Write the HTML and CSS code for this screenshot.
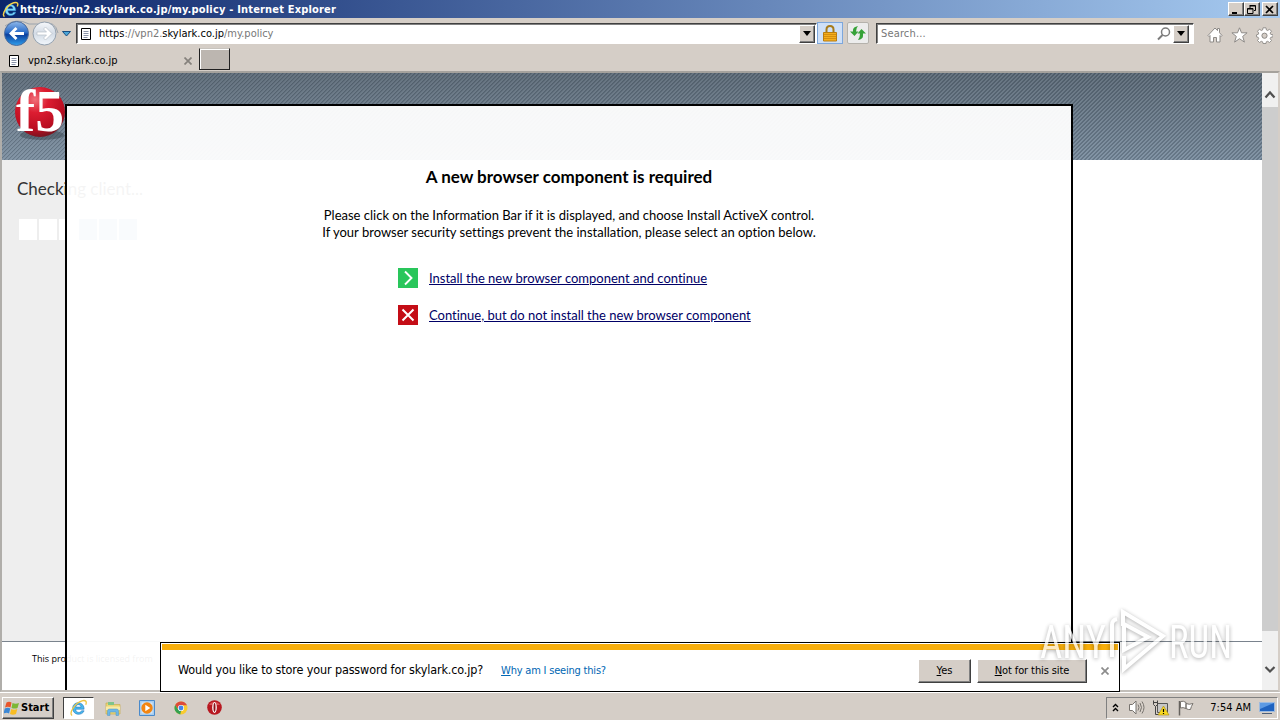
FILE: index.html
```html
<!DOCTYPE html>
<html lang="en">
<head>
    <meta charset="UTF-8">
    <title>https://vpn2.skylark.co.jp/my.policy</title>
    <link rel="stylesheet" href="styles.css">
</head>
<body>
    <div class="titlebar">
        <svg class="ie" width="17" height="17" viewBox="0 0 18 18"><path d="M14.6 10.2H6.2c.2 4 5 4 5.800 1.600h2.600C12.800 17 3.200 16.600 3.200 9.200 3.200 2 14.600 1.600 14.600 10.200zM6.200 8.100h5.400c-.3-3.300-5-3.300-5.400 0z" fill="#7fd8fb" stroke="#2688cc" stroke-width=".5"/><path d="M2.600 16.500C-1 14 6 3.500 12.500 1.800c4-1 5 .8 3.700 4" fill="none" stroke="#f7d34a" stroke-width="1.500"/></svg>
        <span class="title-text">https://vpn2.skylark.co.jp/my.policy - Internet Explorer</span>
        <div class="win-buttons">
            <div class="btn win"><svg width="14" height="11"><path d="M3 8h5v2H3z"/></svg></div>
            <div class="btn win"><svg width="14" height="11"><path d="M5 1.500h5.500v5H9M5 1v3M5 2h5.500M2.500 4.500h5.500v5H2.500zM2.500 5h5.500" fill="none" stroke="#000"/></svg></div>
            <div class="btn win last"><svg width="14" height="11"><path d="M3 2l7 7M10 2l-7 7" stroke="#000" stroke-width="1.700"/></svg></div>
        </div>
    </div>

    <div class="navbar">
        <svg class="arrows" width="74" height="30" viewBox="0 0 74 30">
            <defs>
                <linearGradient id="blue" x1="0" y1="0" x2="0" y2="1"><stop offset="0" stop-color="#8fb8ea"/><stop offset=".45" stop-color="#2b6cc8"/><stop offset=".55" stop-color="#0b3f9d"/><stop offset="1" stop-color="#2fa0ee"/></linearGradient>
                <linearGradient id="pale" x1="0" y1="0" x2="0" y2="1"><stop offset="0" stop-color="#f6f8fb"/><stop offset=".5" stop-color="#d3dbe5"/><stop offset="1" stop-color="#f2f7fc"/></linearGradient>
            </defs>
            <path d="M4 8Q15-1 28 6h14q12-4 15 9" fill="none" stroke="#9aa3ad"/>
            <circle cx="15.500" cy="15.500" r="12" fill="url(#blue)" stroke="#4d6c9c"/>
            <path d="M8 15.500l6.500-6.500 2 2-3 3H23v3h-9.500l3 3-2 2z" fill="#fff"/>
            <circle cx="43.500" cy="15.500" r="11.500" fill="url(#pale)" stroke="#93a0ae"/>
            <path d="M51 15.500l-6.500-6.500-2 2 3 3H36v3h9.500l-3 3 2 2z" fill="#fff" stroke="#b7bec7" stroke-width=".7"/>
            <path d="M61.500 13.500h8L65.500 18z" fill="#4ba6d8" stroke="#174f83"/>
        </svg>
        <div class="field address">
            <svg class="page-icon" width="10" height="12"><path d="M.5.5h9v11h-9z" fill="#fff" stroke="#000"/><path d="M2.500 3.500h5M2.500 5.500h5M2.500 7.500h5M2.500 9.500h4" stroke="#8a93a8"/></svg>
            <span class="url"><b>https</b>://vpn2.<b>skylark.co.jp</b>/my.policy</span>
            <div class="btn drop"><svg width="8" height="5"><path d="M0 0h8L4 5z"/></svg></div>
        </div>
        <div class="lock"><svg width="14" height="17"><path d="M3.500 8V4.500q0-3.500 3.500-3.500t3.500 3.500V8" fill="none" stroke="#a77b1a" stroke-width="2"/><path d="M.5 7.500h13v8.500H.5z" fill="#f5ae1c" stroke="#b97d10"/><path d="M1 9.500h12M1 11.500h12M1 13.500h12" stroke="#d48e10"/></svg></div>
        <div class="refresh"><svg width="16" height="14"><path d="M0 5.500h3V4q0-3 5-4-2 2-2 5.500h2.500L4.500 10zM16 7.500h-3V10q0 3-5 4 2-2 2-6.500H7.500L11.500 3z" fill="#36a238"/></svg></div>
        <div class="field search">
            <span class="search-text">Search...</span>
            <svg width="14" height="14"><circle cx="8.500" cy="5" r="4" fill="none" stroke="#7b7b7b" stroke-width="1.500"/><path d="M5.500 8L1 12.500" stroke="#7b7b7b" stroke-width="2"/></svg>
            <div class="btn drop"><svg width="8" height="5"><path d="M0 0h8L4 5z"/></svg></div>
        </div>
        <div class="tools">
            <svg width="16" height="16" viewBox="0 0 16 16"><path d="M1 8.500L8 1l2.500 2.600V1.500h2v4.200L15 8.500 14 9.500l-1-1V15H9.500v-4.500h-3V15H3V8.500l-1 1z" fill="#fff" stroke="#8d8a87"/></svg>
            <svg width="17" height="16" viewBox="0 0 17 16"><path d="M8.500.8l2 5h5.600l-4.400 3.600 1.700 5.700-4.900-3.400-4.900 3.400 1.700-5.700L.9 5.800h5.600z" fill="#fff" stroke="#8d8a87"/></svg>
            <svg width="17" height="17" viewBox="0 0 17 17"><path d="M7 .8h3l.4 2.200 1.300.5 1.800-1.300 2 2-1.300 1.900.6 1.300 2.200.4v2l-2.200.5-.6 1.400 1.300 1.800-2 2-1.800-1.200-1.400.5L10 16.500H7l-.4-1.700-1.300-.5-1.800 1.200-2-2 1.200-1.800-.5-1.400L.5 9.800v-2l1.700-.4.5-1.300-1.200-1.900 2-2 1.800 1.300L6.600 3z" fill="#fff" stroke="#8d8a87" stroke-width=".9"/><circle cx="8.500" cy="8.700" r="2.600" fill="#d5cec7" stroke="#8d8a87"/></svg>
        </div>
    </div>

    <div class="tabs">
        <div class="tab">
            <svg class="page-icon" width="10" height="12"><path d="M.5.5h9v11h-9z" fill="#fff" stroke="#000"/><path d="M2.500 3.500h5M2.500 5.500h5M2.500 7.500h5M2.500 9.500h4" stroke="#8a93a8"/></svg>
            <span class="tab-text">vpn2.skylark.co.jp</span>
            <svg class="x" width="8" height="8"><path d="M.5.5l7 7M7.500.5l-7 7" stroke="#85817c" stroke-width="1.700"/></svg>
        </div>
        <div class="new-tab"></div>
    </div>

    <div class="view">
        <div class="page">
            <div class="header">
                <svg width="54" height="56" viewBox="0 0 54 56">
                    <defs><radialGradient id="ball" cx=".4" cy=".25" r=".75"><stop offset="0" stop-color="#f0707a"/><stop offset=".35" stop-color="#dc1d31"/><stop offset=".8" stop-color="#b90d20"/><stop offset="1" stop-color="#7c1420"/></radialGradient></defs>
                    <ellipse cx="28" cy="48" rx="22" ry="5" fill="#3a4650" opacity=".5"/>
                    <circle cx="26" cy="25" r="25" fill="url(#ball)"/>
                    <text x="2" y="44" class="f5" textLength="48" lengthAdjust="spacingAndGlyphs">f5</text>
                </svg>
            </div>
            <div class="main">
                <div class="side">
                    <div class="checking">Checking client...</div>
                    <div class="boxes"><i></i><i></i><i></i><i class="on"></i><i class="on"></i><i class="on"></i></div>
                </div>
            </div>
            <div class="footer"><span class="product">This product is licensed from</span></div>

            <div class="modal">
                <h1>A new browser component is required</h1>
                <p>Please click on the Information Bar if it is displayed, and choose Install ActiveX control.<br>If your browser security settings prevent the installation, please select an option below.</p>
                <div class="option">
                    <svg width="20" height="20"><path d="M0 0h20v20H0z" fill="#29c65b"/><path d="M7 3.500L13.500 10 7 16.500" fill="none" stroke="#fff" stroke-width="1.900"/></svg>
                    <a>Install the new browser component and continue</a>
                </div>
                <div class="option">
                    <svg width="20" height="20"><path d="M0 0h20v20H0z" fill="#c40d16"/><path d="M4.500 4.500l11 11M15.500 4.500l-11 11" stroke="#fff" stroke-width="2"/></svg>
                    <a>Continue, but do not install the new browser component</a>
                </div>
            </div>
        </div>
        <div class="scrollbar">
            <svg width="16" height="34"><path d="M3.500 24.500L8 19.500l4.500 5" fill="none" stroke="#505050" stroke-width="2.200"/></svg>
            <div class="thumb"></div>
            <svg width="16" height="59"><path d="M3.500 36L8 40.500l4.500-4.500" fill="none" stroke="#505050" stroke-width="2.200"/></svg>
        </div>

        <div class="notice">
            <div class="stripe"></div>
            <div class="notice-row">
                <span class="question">Would you like to store your password for skylark.co.jp?</span>
                <a class="why"><u>W</u>hy am I seeing this?</a>
                <div class="btn yes"><span><u>Y</u>es</span></div>
                <div class="btn not"><span><u>N</u>ot for this site</span></div>
                <svg width="8" height="8"><path d="M.5.5l7 7M7.500.5l-7 7" stroke="#8c8c8c" stroke-width="1.700"/></svg>
            </div>
        </div>

        <svg class="watermark" width="200" height="70" viewBox="0 0 200 70">
            <text x="4" y="51" textLength="66" lengthAdjust="spacingAndGlyphs">ANY</text>
            <path d="M81 12q-5 1-5 6v32M87 19V5l40 24-39 33V49M88 17v26l24-13z"/>
            <text x="133" y="51" textLength="63" lengthAdjust="spacingAndGlyphs">RUN</text>
        </svg>
    </div>

    <div class="taskbar">
        <div class="btn start">
            <svg width="16" height="16" viewBox="0 0 16 16"><path d="M2.500 2.500Q5 1 7.500 2.500L6.500 7.500Q4 6 1 7.500z" fill="#e9552b"/><path d="M8.500 3Q11.500 4.500 15 3l-1.500 5Q11 9 7.500 8z" fill="#7cb735"/><path d="M.8 8.500Q4 7 6.300 8.500L5 13.500Q3 12-.5 13.500z" fill="#3b87d5"/><path d="M7.300 9Q10 10.500 13.300 9L12 14q-3 1.500-6 0z" fill="#f9bd22"/></svg>
            <span class="start-text">Start</span>
        </div>
        <div class="task active"><svg width="19" height="18" viewBox="0 0 18 18"><path d="M14.600 10.200H6.200c.2 4 5 4 5.800 1.600h2.600C12.800 17 3.200 16.600 3.200 9.200 3.200 2 14.600 1.600 14.600 10.200zM6.200 8.100h5.400c-.3-3.300-5-3.300-5.400 0z" fill="#48b9ee" stroke="#2276bd" stroke-width=".6"/><path d="M2.600 16.500C-1 14 6 3.500 12.500 1.800c4-1 5 .8 3.700 4" fill="none" stroke="#eec443" stroke-width="1.300"/></svg></div>
        <div class="task"><svg width="16" height="16"><path d="M1 3h5l1 1.500h8V14H1z" fill="#ecd675" stroke="#c9ae52" stroke-width=".7"/><path d="M3 2h6v3H3z" fill="#7fc48a"/><path d="M1 6.500h14V10H1z" fill="#f8eba6"/><path d="M2.500 15.500V11q0-2 2-2h7q2 0 2 2v4.500h-2.500v-3.500H5v3.500z" fill="#6db7e6" stroke="#4d94c7" stroke-width=".5"/></svg></div>
        <div class="task"><svg width="16" height="16"><path d="M.5.5h15v15H.5z" fill="#a7cdf0" stroke="#4a8acb"/><path d="M2.500 2.500h11v11h-11z" fill="#d3e6f8"/><circle cx="8" cy="8" r="5.700" fill="#f28512"/><path d="M6.300 4.700L11.300 8l-5 3.300z" fill="#fff"/></svg></div>
        <div class="task"><svg width="14" height="14" viewBox="0 0 14 14"><circle cx="7" cy="7" r="6.500" fill="#f8cb30"/><path d="M1.200 4A6.600 6.600 0 0 1 13 4.200H7L4.300 8.500z" fill="#dd4a3a"/><path d="M1.200 4L4.300 8.700 7 10l-.8 3.500A6.600 6.600 0 0 1 1.200 4z" fill="#35a152"/><circle cx="7" cy="7" r="3.100" fill="#fff"/><circle cx="7" cy="7" r="2.400" fill="#4484e8"/></svg></div>
        <div class="task"><svg width="15" height="15" viewBox="0 0 15 15"><circle cx="7.500" cy="7.500" r="7.300" fill="#b81820"/><path d="M2 5a6 5 0 0 1 11 0z" fill="#da5154"/><ellipse cx="7.500" cy="7.500" rx="2.300" ry="5.400" fill="#fff"/><ellipse cx="7.500" cy="7.500" rx="1" ry="4.400" fill="#8c1017"/></svg></div>
        <div class="tray">
            <svg width="8" height="9"><path d="M1 4l2.500-2.500L6 4M1 8l2.500-2.500L6 8" fill="none" stroke="#000" stroke-width="1.400"/></svg>
            <svg width="17" height="15"><path d="M1.500 4.500h3l3.500-3.500v13L4.500 10.500h-3z" fill="#fff" stroke="#77736e"/><path d="M10 4.500q2 3 0 6M12 3q3 4.500 0 9M14 1.500q4 6 0 12" fill="none" stroke="#77736e"/></svg>
            <svg width="17" height="16"><path d="M4.500 3.500h10v9h-10z" fill="#c7c7c7" stroke="#555"/><path d="M.5.500v4l2 2v8H8M4.500.5v4l-2 2M.5 2.500h4" fill="none" stroke="#444"/><path d="M10.500 6L16 15H5z" fill="#f8d821" stroke="#a88a10" stroke-width=".6"/><path d="M10.500 9v3M10.500 13v1" stroke="#000" stroke-width="1.200"/></svg>
            <svg width="17" height="16"><path d="M1.500 1v14.500" stroke="#66625d" stroke-width="1.500"/><path d="M2.500 1.500q3-1 5.500 1v6q-3-1.500-5.500-.5zM8 3.500q3 1.500 7 0-2 3-2.500 6-2 .5-4.500-1z" fill="#fff" stroke="#77736e"/></svg>
            <span class="clock">7:54 AM</span>
            <svg width="16" height="14"><path d="M.5 1.500h15v9H.5z" fill="#1f63c0" stroke="#9dbbe0"/><path d="M1 2h14L1 8z" fill="#5c9ae4"/><path d="M3 12.500h10" stroke="#4d5f77"/></svg>
        </div>
    </div>
</body>
</html>
```
FILE: styles.css
```css
* {
    box-sizing: border-box;
}
body {
    margin: 0;
    width: 1280px;
    height: 720px;
    overflow: hidden;
    display: flex;
    flex-direction: column;
    background: #d5cec7;
    font-family: "DejaVu Sans Condensed", "DejaVu Sans", sans-serif;
    font-stretch: condensed;
    font-size: 11px;
    color: #000;
    white-space: nowrap;
}
svg {
    display: block;
    flex: none;
}
.btn {
    display: flex;
    align-items: center;
    justify-content: center;
    background: #d5cec7;
    border: 1px solid;
    border-color: #fff #404040 #404040 #fff;
    box-shadow: inset -1px -1px #808080;
}

/* window chrome */
.titlebar {
    flex: none;
    height: 18px;
    padding: 0 2px;
    display: flex;
    align-items: center;
    background: linear-gradient(90deg, #0a246a, #a6caf0);
}
.title-text {
    margin-left: 1px;
    color: #fff;
    font-weight: bold;
    letter-spacing: .18px;
}
.win-buttons {
    margin-left: auto;
    display: flex;
}
.win {
    width: 16px;
    height: 14px;
}
.win.last {
    margin-left: 2px;
}
.navbar {
    flex: none;
    height: 30px;
    display: flex;
    align-items: center;
}
.arrows {
    width: 76px;
}
.field {
    height: 21px;
    display: flex;
    align-items: center;
    background: #fff;
    border: 1px solid;
    border-color: #404040 #fff #fff #404040;
    box-shadow: inset 1px 1px #808080;
}
.address {
    width: 741px;
    padding: 1px 1px 0 4px;
}
.url {
    margin-left: 8px;
    color: #777;
}
.url b {
    font-weight: normal;
    color: #000;
}
.drop {
    width: 16px;
    height: 18px;
    margin-left: auto;
}
.lock,
.refresh {
    display: flex;
    align-items: center;
    justify-content: center;
    height: 22px;
}
.lock {
    width: 26px;
    background: #cfe0f7;
    border: 1px solid #7da7dc;
}
.refresh {
    width: 22px;
    margin: 0 7px 0 4px;
    background: #ececec;
    border: 1px solid #b5b2ac;
    border-radius: 2px;
}
.search {
    width: 318px;
    padding: 1px 4px 0 4px;
}
.search-text {
    color: #777;
    letter-spacing: .15px;
}
.search svg {
    margin-left: auto;
}
.search .drop {
    margin-left: 2px;
}
.search .drop svg {
    margin: 0;
}
.tools {
    display: flex;
    gap: 8px;
    margin: 4px 0 0 13px;
}
.tabs {
    flex: none;
    height: 23px;
    display: flex;
}
.tab {
    width: 199px;
    padding: 2px 7px 0 9px;
    display: flex;
    align-items: center;
}
.tab-text {
    margin-left: 9px;
}
.tab .x {
    margin-left: auto;
}
.new-tab {
    width: 31px;
    height: 22px;
    background: #bcb6b0;
    border: 1px solid #202020;
    border-top-color: #c8c4be;
    box-shadow: inset 1px 1px #fff;
}

/* web page */
.view {
    flex: none;
    height: 621px;
    position: relative;
    display: flex;
    border: 2px solid;
    border-color: #a5a29d #d5cec7 #c2beb9 #b0aeaa;
}
.page {
    position: relative;
    flex: 1;
    display: flex;
    flex-direction: column;
    overflow: hidden;
    background: #fff;
    font-stretch: normal;
}
.header {
    flex: none;
    height: 87px;
    padding: 14px 0 0 12px;
    background: repeating-linear-gradient(135deg, rgba(30, 40, 50, .22) 0 1px, rgba(255, 255, 255, .06) 1.500px 2.830px), linear-gradient(#5d6b78, #7c8fa1);
}
.f5 {
    font-family: "Liberation Serif", serif;
    font-weight: bold;
    font-size: 59px;
    fill: #fff;
}
.main {
    flex: none;
    height: 481px;
}
.side {
    width: 259px;
    height: 481px;
    padding: 19px 0 0 15px;
    background: #eee;
}
.checking {
    font-family: Lato, sans-serif;
    font-size: 17px;
    line-height: 20px;
    color: #333;
}
.boxes {
    display: flex;
    gap: 2px;
    margin: 20px 0 0 2px;
}
.boxes i {
    width: 18px;
    height: 21px;
    background: #fff;
}
.boxes .on {
    background: #84b0d8;
}
.footer {
    flex: none;
    height: 49px;
    padding: 10px 0 0 30px;
    border-top: 1px solid #7a838d;
    font-family: "Open Sans", sans-serif;
    font-size: 9px;
}
.modal {
    position: absolute;
    left: 63px;
    top: 31px;
    width: 1008px;
    height: 640px;
    padding: 61px 0 0;
    border: 2px solid #000;
    background: rgba(255, 255, 255, .95);
    font-family: Lato, sans-serif;
    font-size: 13px;
    font-variant-ligatures: none;
}
.modal h1 {
    margin: 0;
    font-size: 17px;
    line-height: 20px;
    text-align: center;
}
.modal p {
    margin: 20px 0 27px;
    line-height: 17px;
    text-align: center;
}
.option {
    display: flex;
    align-items: center;
    gap: 11px;
    margin: 0 0 17px 331px;
}
.option a {
    color: #000066;
    text-decoration: underline;
}
.scrollbar {
    width: 16px;
    display: flex;
    flex-direction: column;
    background: #f0f0f0;
}
.thumb {
    flex: 1;
    background: #cdcdcd;
}
.notice {
    position: absolute;
    left: 158px;
    top: 569px;
    width: 960px;
    height: 50px;
    padding: 1px;
    background: #fff;
    border: 1px solid #000;
}
.stripe {
    height: 6px;
    background: #f7ae0b;
}
.notice-row {
    height: 41px;
    padding: 0 9px 0 16px;
    display: flex;
    align-items: center;
}
.question {
    margin-bottom: 2px;
    font-size: 12.5px;
    letter-spacing: -.14px;
}
.why {
    margin-left: 18px;
    color: #0066b3;
    letter-spacing: -.2px;
}
.yes {
    width: 53px;
    height: 24px;
    margin-left: auto;
}
.not {
    width: 110px;
    height: 24px;
    margin: 0 14px 0 6px;
    letter-spacing: -.1px;
}
.watermark {
    position: absolute;
    left: 1034px;
    top: 534px;
    overflow: visible;
    filter: drop-shadow(0 1px 2px rgba(0, 0, 0, .45));
    opacity: .75;
}
.watermark text {
    font-family: Roboto, sans-serif;
    font-size: 47px;
    fill: #fff;
}
.watermark path {
    fill: none;
    stroke: #fff;
    stroke-width: 4;
}

/* taskbar */
.taskbar {
    flex: none;
    height: 28px;
    padding: 2px 2px 0;
    display: flex;
    align-items: center;
    border-top: 1px solid #fff;
}
.start {
    width: 52px;
    height: 22px;
    justify-content: flex-start;
    padding-left: 1px;
    margin-right: 9px;
}
.start-text {
    margin-left: 1px;
    font-weight: bold;
}
.task {
    width: 31px;
    height: 22px;
    margin-right: 3px;
    display: flex;
    align-items: center;
    justify-content: center;
}
.task.active {
    background: #fff;
    border: 1px solid;
    border-color: #404040 #fff #fff #404040;
}
.tray {
    height: 22px;
    width: 172px;
    margin-left: auto;
    padding: 0 2px 0 5px;
    display: flex;
    align-items: center;
    gap: 8px;
    border: 1px solid;
    border-color: #808080 #fff #fff #808080;
}
.clock {
    margin-left: auto;
}
```
